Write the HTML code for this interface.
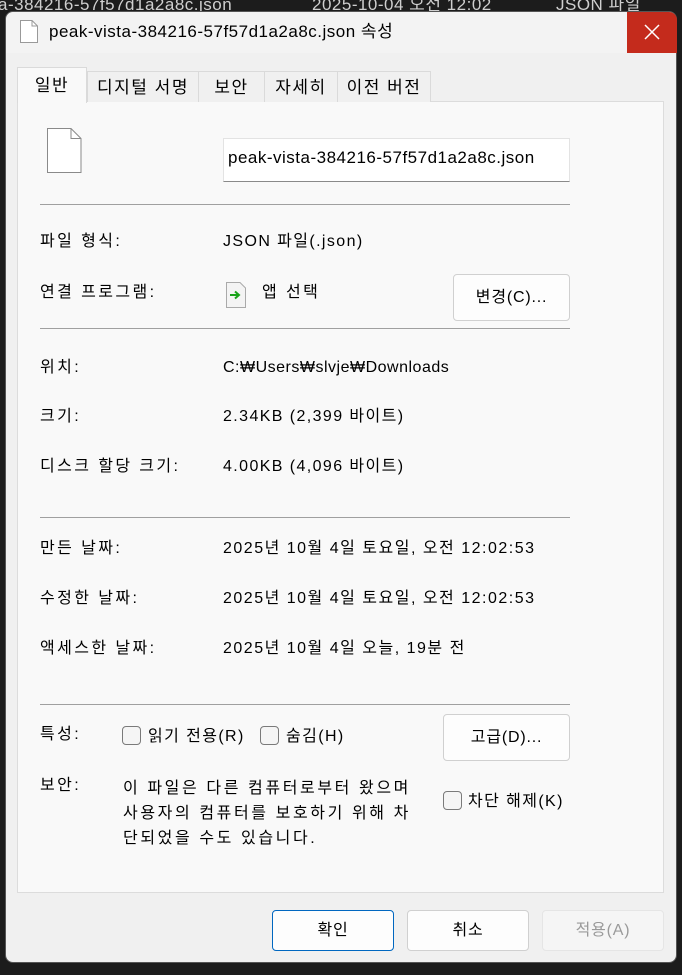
<!DOCTYPE html>
<html><head><meta charset="utf-8"><style>
*{margin:0;padding:0;box-sizing:border-box}
body{width:682px;height:975px;background:#1c1c1c;position:relative;overflow:hidden;font-family:"Liberation Sans","Noto Sans CJK KR","NanumGothic",sans-serif;font-size:16px;color:#000}
.a{position:absolute;white-space:nowrap;line-height:20px;letter-spacing:1.4px}
.k{letter-spacing:2.4px}
.l{letter-spacing:0.5px}
.dlg{position:absolute;left:5px;top:11px;width:672px;height:952px;background:#f0f0f0;border-radius:8px;overflow:hidden;border:1px solid #555}
.sep{position:absolute;left:40px;width:530px;height:1px;background:#a0a0a0}
.btn{position:absolute;background:#fdfdfd;border:1px solid #d0d0d0;border-radius:4px;text-align:center;font-size:16px;letter-spacing:0.8px}
.cb{position:absolute;width:19px;height:19px;border:1px solid #7a7a7a;border-radius:4px;background:#f5f5f5}
.tab{position:absolute;top:71px;height:31px;border:1px solid #dadada;border-bottom:none;background:#f0f0f0;text-align:center;line-height:32px;font-size:17px;letter-spacing:1.5px}
</style></head><body>
<div class="a l" style="left:-2px;top:-5px;color:#cfcfcf;font-size:17px">a-384216-57f57d1a2a8c.json</div>
<div class="a l" style="left:312px;top:-5px;color:#cfcfcf;font-size:17px">2025-10-04 오전 12:02</div>
<div class="a l" style="left:556px;top:-5px;color:#cfcfcf;font-size:17px">JSON 파일</div>
<div class="dlg"></div>
<div style="position:absolute;left:6px;top:12px;width:621px;height:41px;background:#f3f3f3;border-top-left-radius:8px"></div>
<div style="position:absolute;left:627px;top:12px;width:50px;height:41px;background:#c42b1c;border-top-right-radius:8px"></div>
<svg style="position:absolute;left:642px;top:22px" width="20" height="20"><path d="M3 3L17 17M17 3L3 17" stroke="#fff" stroke-width="1.5"/></svg>
<svg style="position:absolute;left:20px;top:20px" width="18" height="23"><path d="M.5 .5H12L17.5 6V22.5H.5Z" fill="#fff" stroke="#999"/><path d="M12 .5V6H17.5" fill="none" stroke="#999"/></svg>
<div class="a l" style="left:49px;top:22px;font-size:17px">peak-vista-384216-57f57d1a2a8c.json 속성</div>
<div style="position:absolute;left:17px;top:101px;width:647px;height:792px;background:#f9f9f9;border:1px solid #dcdcdc"></div>
<div class="tab" style="left:87px;width:112px">디지털 서명</div>
<div class="tab" style="left:198px;width:67px">보안</div>
<div class="tab" style="left:264px;width:74px">자세히</div>
<div class="tab" style="left:337px;width:94px">이전 버전</div>
<div class="tab" style="left:17px;top:67px;height:36px;width:70px;background:#f9f9f9;line-height:36px">일반</div>
<svg style="position:absolute;left:47px;top:128px" width="35" height="45"><path d="M.5 .5H24L34 10.5V44.5H.5Z" fill="#fff" stroke="#8a8a8a"/><path d="M24 .5V10.5H34" fill="none" stroke="#8a8a8a"/></svg>
<div style="position:absolute;left:223px;top:138px;width:347px;height:44px;background:#fff;border:1px solid #e3e3e3;border-bottom:1px solid #8a8a8a"></div>
<div class="a l" style="left:228px;top:148px;font-size:17px">peak-vista-384216-57f57d1a2a8c.json</div>
<div class="sep" style="top:204px"></div>
<div class="a k" style="left:40px;top:232px">파일 형식:</div>
<div class="a" style="left:223px;top:232px">JSON 파일(.json)</div>
<div class="a k" style="left:40px;top:283px">연결 프로그램:</div>
<svg style="position:absolute;left:226px;top:282px" width="20" height="26"><path d="M.5 .5H14L19.5 6V25.5H.5Z" fill="#f4f4f4" stroke="#aaa"/><path d="M4 13H12M9 9.5L13 13L9 16.5" fill="none" stroke="#1aa31a" stroke-width="2"/></svg>
<div class="a k" style="left:262px;top:283px">앱 선택</div>
<div class="btn" style="left:453px;top:274px;width:117px;height:47px;line-height:45px">변경(C)...</div>
<div class="sep" style="top:328px"></div>
<div class="a k" style="left:40px;top:358px">위치:</div>
<div class="a l" style="left:223px;top:358px">C:₩Users₩slvje₩Downloads</div>
<div class="a k" style="left:40px;top:407px">크기:</div>
<div class="a" style="left:223px;top:407px">2.34KB (2,399 바이트)</div>
<div class="a k" style="left:40px;top:457px">디스크 할당 크기:</div>
<div class="a" style="left:223px;top:457px">4.00KB (4,096 바이트)</div>
<div class="sep" style="top:517px"></div>
<div class="a k" style="left:40px;top:539px">만든 날짜:</div>
<div class="a" style="left:223px;top:539px;letter-spacing:1.5px">2025년 10월 4일 토요일, 오전 12:02:53</div>
<div class="a k" style="left:40px;top:589px">수정한 날짜:</div>
<div class="a" style="left:223px;top:589px;letter-spacing:1.5px">2025년 10월 4일 토요일, 오전 12:02:53</div>
<div class="a k" style="left:40px;top:639px">액세스한 날짜:</div>
<div class="a" style="left:223px;top:639px;letter-spacing:1.5px">2025년 10월 4일 오늘, 19분 전</div>
<div class="sep" style="top:704px"></div>
<div class="a k" style="left:40px;top:725px">특성:</div>
<div class="cb" style="left:122px;top:726px"></div>
<div class="a" style="left:148px;top:727px">읽기 전용(R)</div>
<div class="cb" style="left:260px;top:726px"></div>
<div class="a" style="left:286px;top:727px">숨김(H)</div>
<div class="btn" style="left:443px;top:714px;width:127px;height:47px;line-height:45px">고급(D)...</div>
<div class="a k" style="left:40px;top:776px">보안:</div>
<div class="a" style="left:123px;top:776px;line-height:25px;letter-spacing:2.6px">이 파일은 다른 컴퓨터로부터 왔으며<br>사용자의 컴퓨터를 보호하기 위해 차<br>단되었을 수도 있습니다.</div>
<div class="cb" style="left:443px;top:791px"></div>
<div class="a" style="left:468px;top:792px">차단 해제(K)</div>
<div class="btn" style="left:272px;top:910px;width:122px;height:41px;line-height:39px;border:1px solid #0067c0">확인</div>
<div class="btn" style="left:407px;top:910px;width:122px;height:41px;line-height:39px">취소</div>
<div class="btn" style="left:542px;top:910px;width:122px;height:41px;line-height:39px;background:#f5f5f5;border-color:#e5e5e5;color:#9a9a9a">적용(A)</div>
</body></html>
